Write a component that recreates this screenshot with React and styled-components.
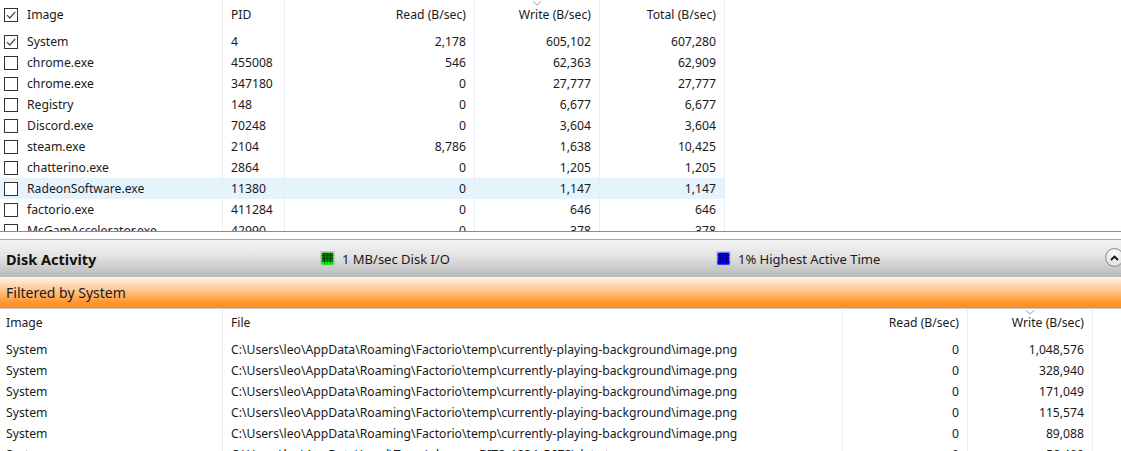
import React from 'react'
import styled, { createGlobalStyle } from 'styled-components'

const GlobalStyle = createGlobalStyle`
  html, body {
    margin: 0;
    padding: 0;
    background: #fff;
  }
  body {
    font-family: 'Noto Sans', 'Open Sans', sans-serif;
    font-size: 12.2px;
    color: #1a1a1a;
  }
`

const TOP_COLS = '223px 62px 190px 125px 125px 1fr'
const BOTTOM_COLS = '223px 620px 125px 125px 1fr'

const processes = [
  { name: 'System', pid: '4', read: '2,178', write: '605,102', total: '607,280', checked: true },
  { name: 'chrome.exe', pid: '455008', read: '546', write: '62,363', total: '62,909' },
  { name: 'chrome.exe', pid: '347180', read: '0', write: '27,777', total: '27,777' },
  { name: 'Registry', pid: '148', read: '0', write: '6,677', total: '6,677' },
  { name: 'Discord.exe', pid: '70248', read: '0', write: '3,604', total: '3,604' },
  { name: 'steam.exe', pid: '2104', read: '8,786', write: '1,638', total: '10,425' },
  { name: 'chatterino.exe', pid: '2864', read: '0', write: '1,205', total: '1,205' },
  { name: 'RadeonSoftware.exe', pid: '11380', read: '0', write: '1,147', total: '1,147', selected: true },
  { name: 'factorio.exe', pid: '411284', read: '0', write: '646', total: '646' },
  { name: 'MsGamAccelerator.exe', pid: '42990', read: '0', write: '378', total: '378' },
]

const PATH = 'C:\\Users\\leo\\AppData\\Roaming\\Factorio\\temp\\currently-playing-background\\image.png'
const files = [
  { image: 'System', file: PATH, read: '0', write: '1,048,576' },
  { image: 'System', file: PATH, read: '0', write: '328,940' },
  { image: 'System', file: PATH, read: '0', write: '171,049' },
  { image: 'System', file: PATH, read: '0', write: '115,574' },
  { image: 'System', file: PATH, read: '0', write: '89,088' },
  { image: 'System', file: 'C:\\Users\\leo\\AppData\\Local\\Temp\\chrome_BITS_1234_5678\\data.tmp', read: '0', write: '56,400' },
]

const Page = styled.div`
  width: 1121px;
  height: 451px;
  overflow: hidden;
  display: flex;
  flex-direction: column;
`

const TopPanel = styled.div`
  height: 231px;
  flex-shrink: 0;
  overflow: hidden;
  border-bottom: 1px solid #8c8c8c;
`

const Row = styled.div`
  display: grid;
  grid-template-columns: ${p => p.$cols};
  height: ${p => p.$h || 21}px;
  align-items: stretch;
`

const Cell = styled.div`
  position: relative;
  display: flex;
  align-items: center;
  justify-content: ${p => (p.$right ? 'flex-end' : 'flex-start')};
  padding: ${p => (p.$right ? '0 8px 0 0' : `0 0 0 ${p.$pl || 8}px`)};
  padding-bottom: ${p => p.$head || 0}px;
  border-right: ${p => (p.$blank ? 'none' : '1px solid #e9eef5')};
  background: ${p => (p.$selected && !p.$blank ? '#e5f3fd' : 'transparent')};
  white-space: nowrap;
  overflow: hidden;
`

const Box = styled.span`
  width: 14px;
  height: 14px;
  box-sizing: border-box;
  border: 1px solid #333;
  background: #fff;
  margin: 0 9px 0 0;
  display: inline-flex;
  align-items: center;
  justify-content: center;
  flex-shrink: 0;
`

const SortMark = styled.svg`
  position: absolute;
  top: 1px;
  left: 50%;
  margin-left: -5px;
`

const Splitter = styled.div`
  height: 7px;
  flex-shrink: 0;
  border-bottom: 1px solid #a3a3a3;
`

const SectionBar = styled.div`
  height: 37px;
  flex-shrink: 0;
  display: flex;
  align-items: center;
  background: linear-gradient(#f5f5f5 0%, #e2e2e2 45%, #b9b9b9 100%);
  position: relative;
`

const SectionTitle = styled.div`
  font-weight: 700;
  font-size: 14.5px;
  color: #111;
  padding-left: 6px;
  width: 314px;
  flex-shrink: 0;
`

const Legend = styled.div`
  display: flex;
  align-items: center;
  gap: 7px;
  font-size: 13px;
  color: #1a1a1a;
  width: ${p => p.$w}px;
  flex-shrink: 0;
`

const Collapse = styled.div`
  position: absolute;
  left: 1105px;
  top: 8px;
  width: 19px;
  height: 19px;
  box-sizing: border-box;
  border-radius: 50%;
  border: 1px solid #8a8a8a;
  background: radial-gradient(circle at 50% 30%, #ffffff, #d6d6d6);
  display: flex;
  align-items: center;
  justify-content: center;
`

const FilterBar = styled.div`
  height: 32px;
  flex-shrink: 0;
  display: flex;
  align-items: center;
  padding-left: 6px;
  padding-bottom: 1px;
  box-sizing: border-box;
  font-size: 14px;
  color: #1a1a1a;
  background: linear-gradient(#fff3e8 0%, #ffc995 40%, #ff9832 80%, #ff8a1c 100%);
  border-bottom: 1px solid #c9c9c9;
`

const BottomPanel = styled.div`
  flex: 1;
  overflow: hidden;
`

function Check({ on }) {
  return (
    <Box>
      {on && (
        <svg width="12" height="12" viewBox="0 0 12 12">
          <path d="M2 6.2 L4.8 9 L10.2 2.8" fill="none" stroke="#444" strokeWidth="1.2" />
        </svg>
      )}
    </Box>
  )
}

function Sort() {
  return (
    <SortMark width="10" height="5" viewBox="0 0 10 5">
      <path d="M1 0.5 L5 4 L9 0.5" fill="none" stroke="#9aa0a8" strokeWidth="1" />
    </SortMark>
  )
}

function Meter({ color, light }) {
  return (
    <svg width="15" height="15" viewBox="0 0 15 15">
      <rect x="0.5" y="0.5" width="14" height="14" fill="#fff" stroke="#c8c8c8" />
      <rect x="1.5" y="1.5" width="12" height="12" fill={color} />
      <rect x="1.5" y="10.5" width="12" height="3" fill={light} />
      <path
        d="M4.5 1.5V13.5M7.5 1.5V13.5M10.5 1.5V13.5M1.5 4.5H13.5M1.5 7.5H13.5M1.5 10.5H13.5"
        stroke="#000"
        strokeOpacity="0.55"
        strokeWidth="0.6"
      />
    </svg>
  )
}

export default function App() {
  return (
    <>
      <GlobalStyle />
      <Page>
        <TopPanel>
          <Row $cols={TOP_COLS} $h={31}>
            <Cell $pl={4} $head={2}><Check on />Image</Cell>
            <Cell $head={2}>PID</Cell>
            <Cell $right $head={2}>Read (B/sec)</Cell>
            <Cell $right $head={2}><Sort />Write (B/sec)</Cell>
            <Cell $right $head={2}>Total (B/sec)</Cell>
            <Cell $blank />
          </Row>
          {processes.map((p, i) => (
            <Row key={i} $cols={TOP_COLS}>
              <Cell $pl={4} $selected={p.selected}><Check on={p.checked} />{p.name}</Cell>
              <Cell $selected={p.selected}>{p.pid}</Cell>
              <Cell $right $selected={p.selected}>{p.read}</Cell>
              <Cell $right $selected={p.selected}>{p.write}</Cell>
              <Cell $right $selected={p.selected}>{p.total}</Cell>
              <Cell $blank />
            </Row>
          ))}
        </TopPanel>
        <Splitter />
        <SectionBar>
          <SectionTitle>Disk Activity</SectionTitle>
          <Legend $w={396}>
            <Meter color="#008000" light="#00ff00" />
            1 MB/sec Disk I/O
          </Legend>
          <Legend $w={300}>
            <Meter color="#0000e0" light="#0000ff" />
            1% Highest Active Time
          </Legend>
          <Collapse>
            <svg width="9" height="6" viewBox="0 0 9 6">
              <path d="M1 5 L4.5 1.5 L8 5" fill="none" stroke="#111" strokeWidth="1.8" />
            </svg>
          </Collapse>
        </SectionBar>
        <FilterBar>Filtered by System</FilterBar>
        <BottomPanel>
          <Row $cols={BOTTOM_COLS} $h={30}>
            <Cell $pl={6} $head={3}>Image</Cell>
            <Cell $head={3}>File</Cell>
            <Cell $right $head={3}>Read (B/sec)</Cell>
            <Cell $right $head={3}><Sort />Write (B/sec)</Cell>
            <Cell $blank />
          </Row>
          {files.map((f, i) => (
            <Row key={i} $cols={BOTTOM_COLS}>
              <Cell $pl={6}>{f.image}</Cell>
              <Cell>{f.file}</Cell>
              <Cell $right>{f.read}</Cell>
              <Cell $right>{f.write}</Cell>
              <Cell $blank />
            </Row>
          ))}
        </BottomPanel>
      </Page>
    </>
  )
}
